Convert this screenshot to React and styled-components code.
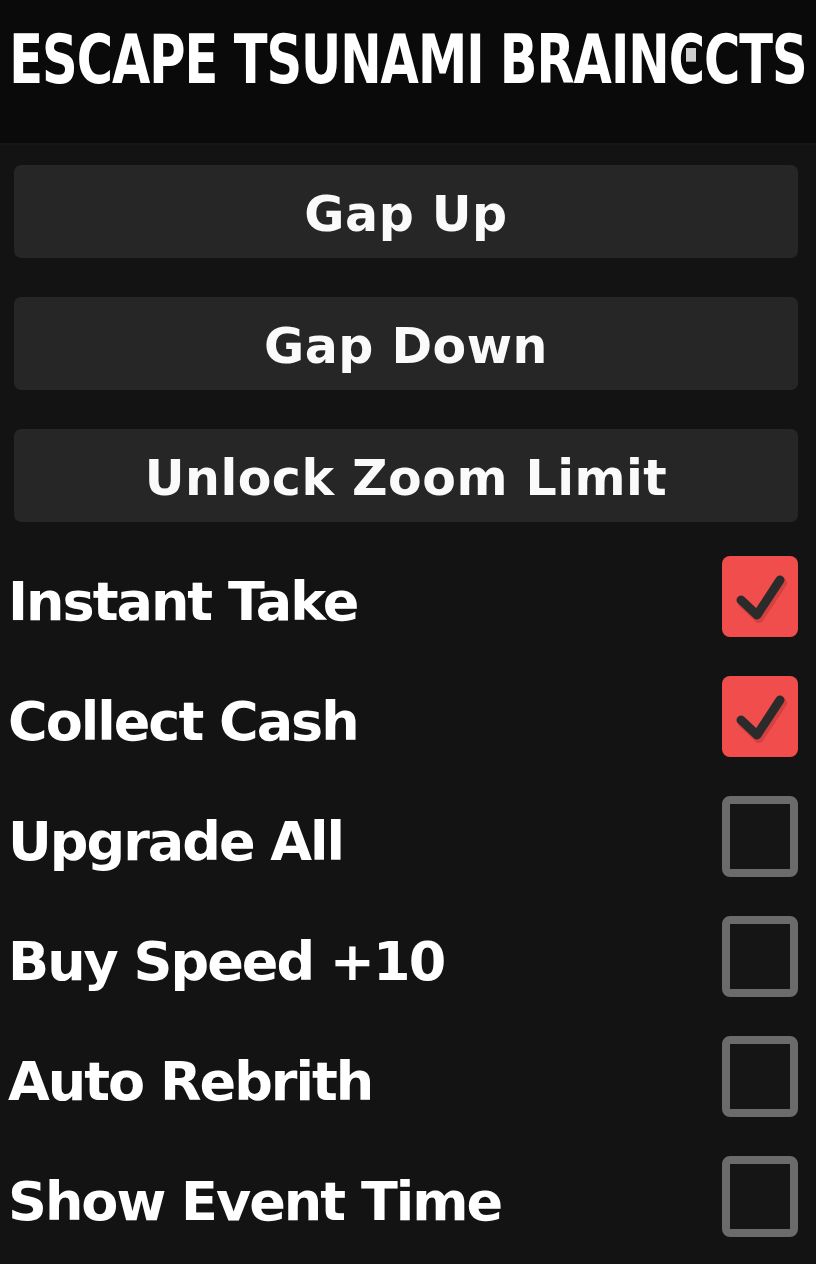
import React from 'react';
import styled, { createGlobalStyle } from 'styled-components';

const Global = createGlobalStyle`
  html, body { margin: 0; padding: 0; background: #131313; }
  body { font-family: "DejaVu Sans", "Open Sans", sans-serif; color: #fff; }
`;

const Page = styled.div`
  width: 816px;
  height: 1264px;
  overflow: hidden;
  background: #131313;
  display: flex;
  flex-direction: column;
`;

const Header = styled.header`
  height: 145px;
  background: #0a0a0a;
  border-bottom: 2px solid #161616;
  display: flex;
  align-items: flex-start;
  justify-content: center;
  overflow: hidden;
  box-sizing: border-box;
`;

const Title = styled.h1`
  margin: 22px 0 0;
  font-family: "DejaVu Sans Condensed", "DejaVu Sans", sans-serif;
  font-weight: 700;
  font-size: 55px;
  line-height: 60px;
  letter-spacing: -1px;
  white-space: nowrap;
  color: #fff;
  transform: scaleY(1.24);
  transform-origin: top center;
`;

const Glitch = styled.span`
  position: relative;
  &::after {
    content: '';
    position: absolute;
    left: 17px;
    top: 23px;
    width: 10px;
    height: 11px;
    background: #cfcfcf;
  }
`;

const Buttons = styled.div`
  display: flex;
  flex-direction: column;
  gap: 39px;
  padding: 20px 18px 0 14px;
`;

const Button = styled.button`
  height: 93px;
  border: none;
  border-radius: 7px;
  background: #262626;
  color: #fafafa;
  font-family: "DejaVu Sans", sans-serif;
  font-weight: 700;
  font-size: 49px;
  letter-spacing: 0.5px;
  display: flex;
  align-items: center;
  justify-content: center;
  padding: 6px 0 0;
`;

const Toggles = styled.div`
  display: flex;
  flex-direction: column;
  padding: 14px 18px 0 8px;
`;

const Row = styled.div`
  height: 120px;
  display: flex;
  align-items: center;
  justify-content: space-between;
`;

const Label = styled.span`
  font-family: "DejaVu Sans", sans-serif;
  font-weight: 700;
  font-size: 54px;
  letter-spacing: -2px;
  color: #fff;
  padding-top: 10px;
`;

const Box = styled.div`
  width: 76px;
  height: 81px;
  box-sizing: border-box;
  border-radius: 8px;
  display: flex;
  align-items: center;
  justify-content: center;
  background: ${p => (p.$on ? '#f24d4d' : '#151515')};
  border: ${p => (p.$on ? 'none' : '8px solid #6b6b6b')};
`;

const Check = () => (
  <svg width="76" height="81" viewBox="0 0 76 81" fill="none">
    <path d="M19 44 L35 59 L58 24" stroke="#b83636" strokeOpacity="0.5" strokeWidth="10" strokeLinecap="round" strokeLinejoin="round" transform="translate(2 3)" />
    <path d="M19 44 L35 59 L58 24" stroke="#2b2b2b" strokeWidth="9" strokeLinecap="round" strokeLinejoin="round" />
  </svg>
);

const buttons = ['Gap Up', 'Gap Down', 'Unlock Zoom Limit'];
const toggles = [
  ['Instant Take', true],
  ['Collect Cash', true],
  ['Upgrade All', false],
  ['Buy Speed +10', false],
  ['Auto Rebrith', false],
  ['Show Event Time', false],
];

export default function App() {
  return (
    <Page>
      <Global />
      <Header>
        <Title>
          ESCAPE TSUNAMI BRAIN<Glitch>C</Glitch>CTS
        </Title>
      </Header>
      <Buttons>
        {buttons.map(b => (
          <Button key={b}>{b}</Button>
        ))}
      </Buttons>
      <Toggles>
        {toggles.map(([name, on]) => (
          <Row key={name}>
            <Label>{name}</Label>
            <Box $on={on}>{on && <Check />}</Box>
          </Row>
        ))}
      </Toggles>
    </Page>
  );
}
